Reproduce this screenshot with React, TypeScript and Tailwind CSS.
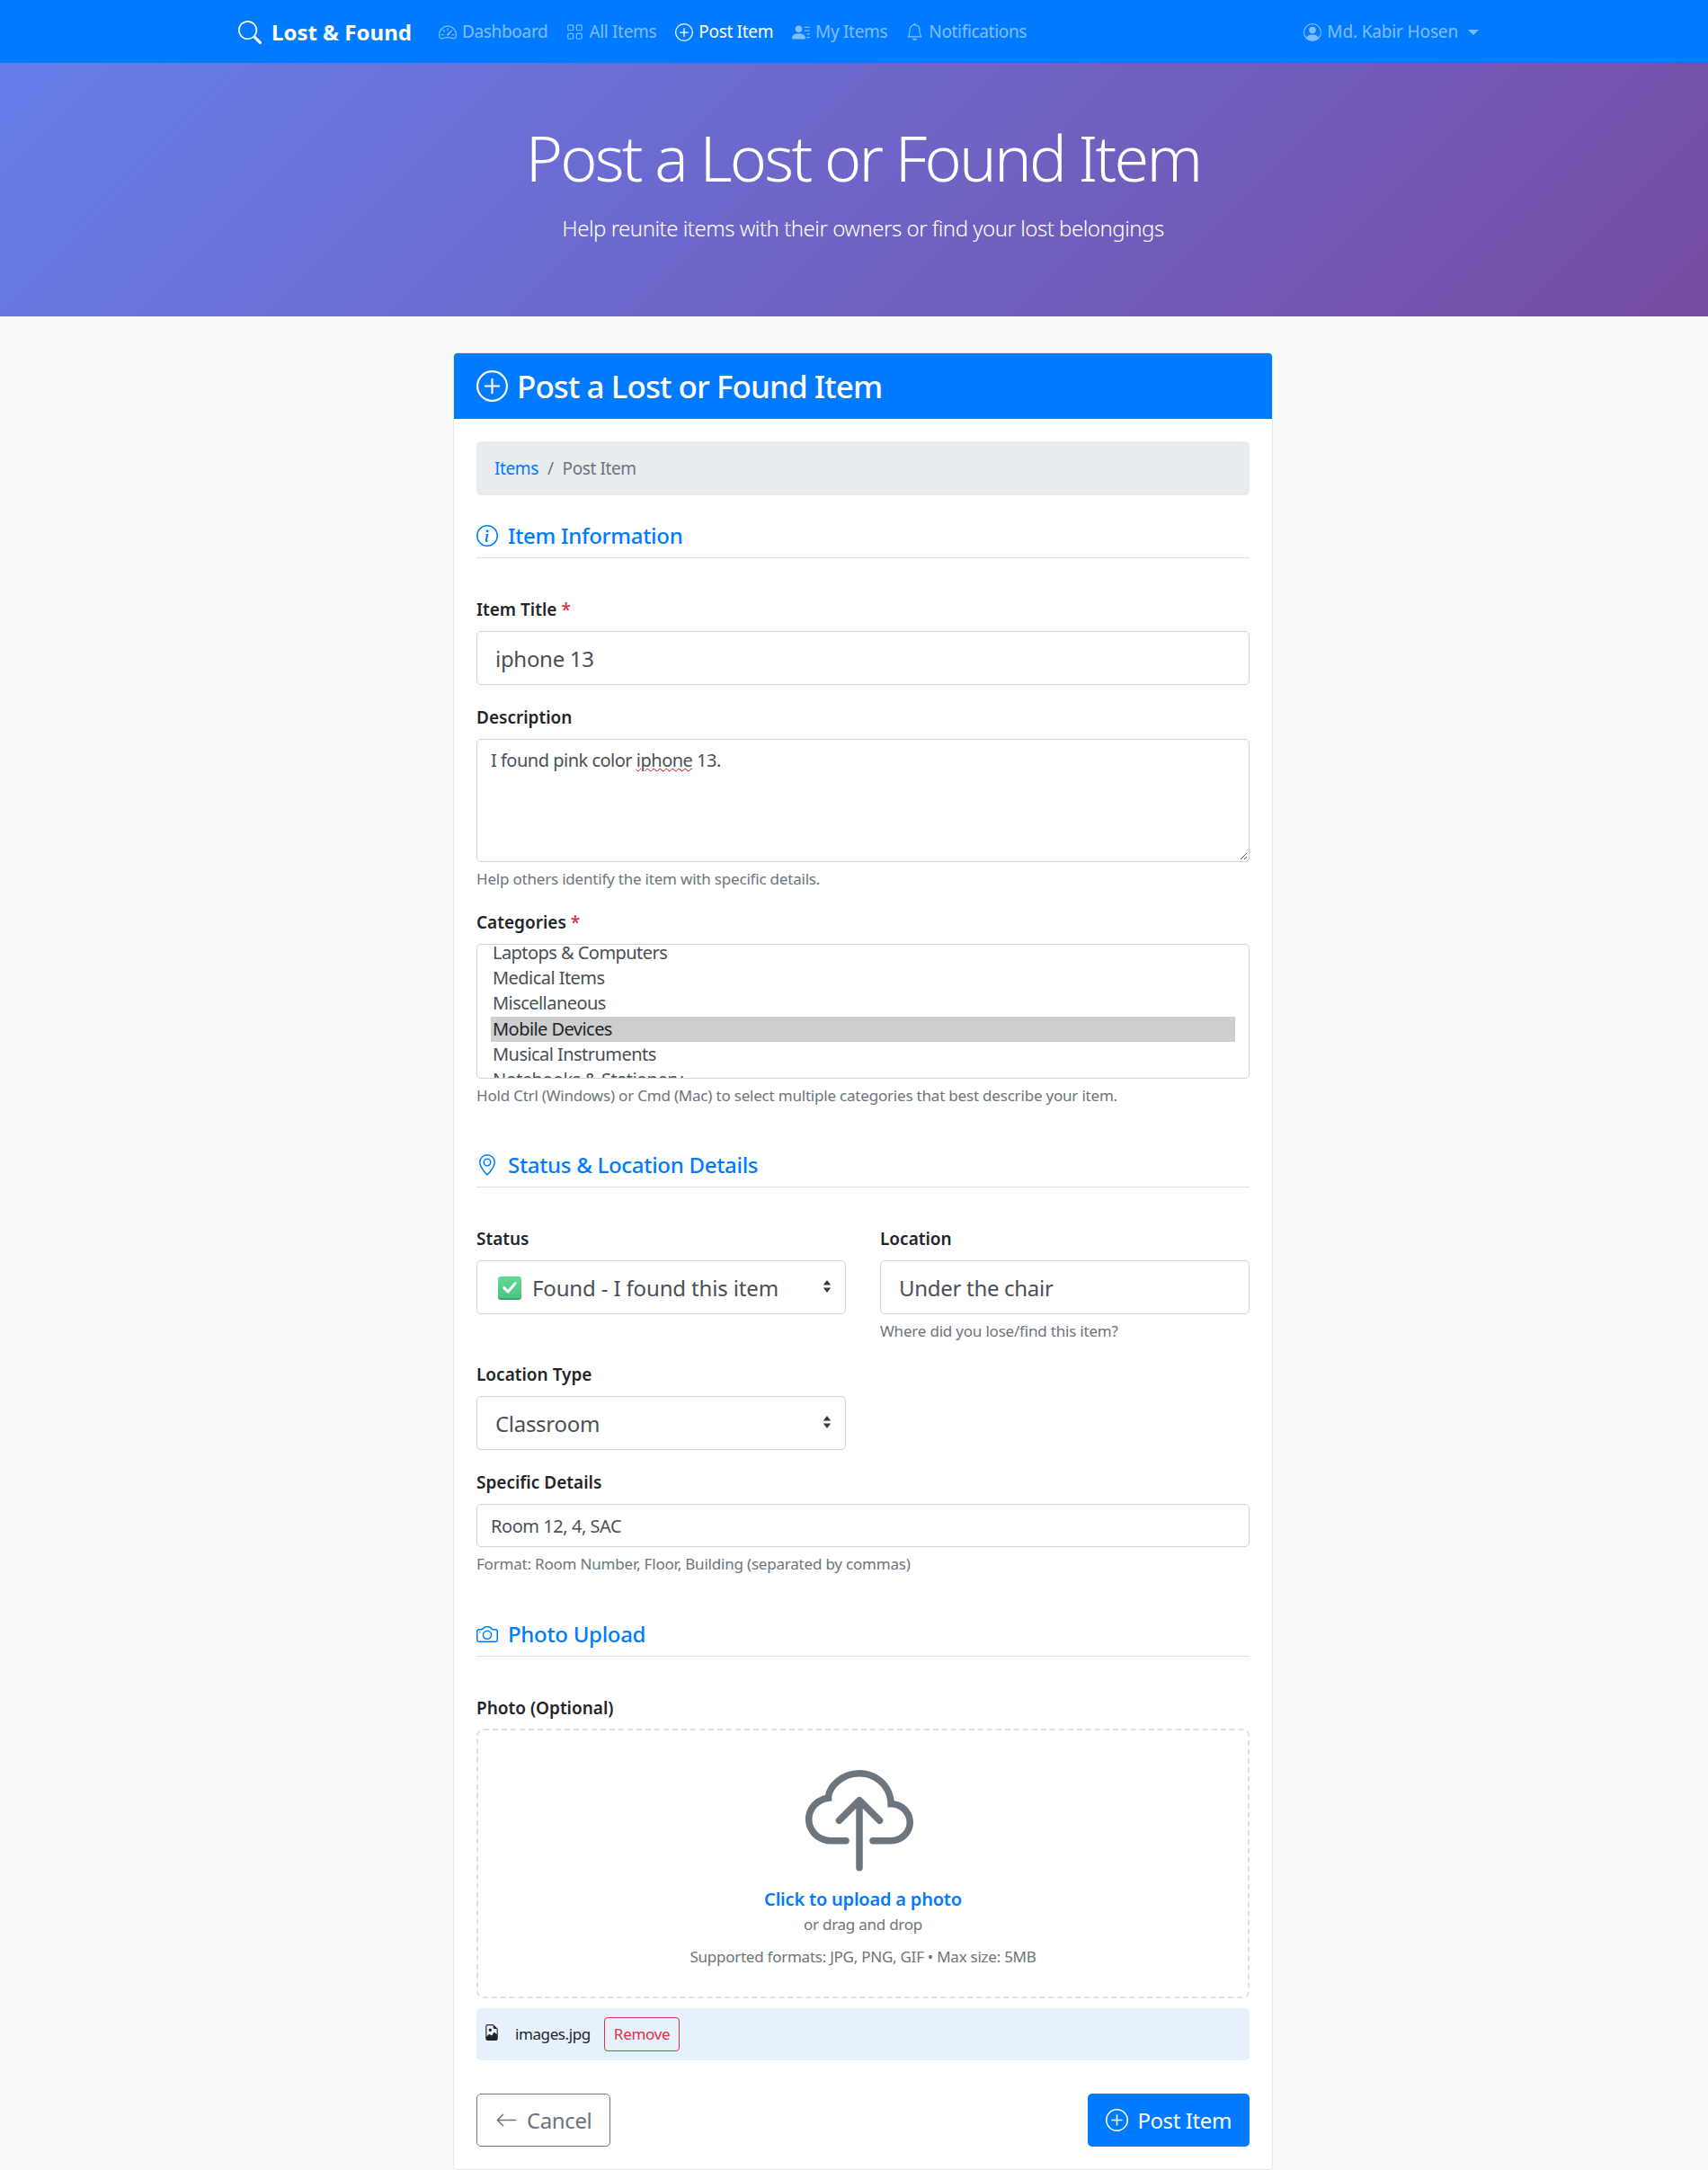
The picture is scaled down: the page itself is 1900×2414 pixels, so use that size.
import {
  BsArrowLeft,
  BsBell,
  BsCamera,
  BsCloudUpload,
  BsFileEarmarkImage,
  BsGeoAlt,
  BsGrid,
  BsInfoCircle,
  BsPersonCircle,
  BsPersonLinesFill,
  BsPlusCircle,
  BsSearch,
  BsSpeedometer2,
} from "react-icons/bs";
import type { ReactNode } from "react";

const navItems = [
  { label: "Dashboard", icon: <BsSpeedometer2 className="w-[20px] h-[20px]" /> },
  { label: "All Items", icon: <BsGrid className="w-[19px] h-[19px]" /> },
  { label: "Post Item", icon: <BsPlusCircle className="w-[20px] h-[20px]" />, active: true },
  { label: "My Items", icon: <BsPersonLinesFill className="w-[20px] h-[20px]" /> },
  { label: "Notifications", icon: <BsBell className="w-[19px] h-[19px]" /> },
];

const categories = ["Laptops & Computers", "Medical Items", "Miscellaneous", "Mobile Devices", "Musical Instruments", "Notebooks & Stationery"];

function SectionTitle({ icon, children, className = "" }: { icon: ReactNode; children: ReactNode; className?: string }) {
  return (
    <div className={`flex items-center h-[44px] border-b border-[#dee2e6] pb-[5px] text-[#007bff] ${className}`}>
      <span className="w-[35px] flex items-center text-[24px]">{icon}</span>
      <h3 className="text-[24px] font-medium tracking-[-0.3px]">{children}</h3>
    </div>
  );
}

function Label({ children, required }: { children: ReactNode; required?: boolean }) {
  return (
    <div className="h-[27px] mb-[11px] pt-[1px] text-[19px] leading-[27px] font-semibold text-[#212529]">
      {children}
      {required && <span className="text-[#dc3545]"> *</span>}
    </div>
  );
}

function Help({ children }: { children: ReactNode }) {
  return <p className="mt-[6px] h-[25px] text-[17px] leading-[25px] text-[#6c757d] tracking-[-0.2px]">{children}</p>;
}

function LargeField({ children }: { children: ReactNode }) {
  return (
    <div className="h-[60px] flex items-center px-[20px] pt-[1px] rounded-[5px] border border-[#ced4da] bg-white text-[24px] text-[#495057] tracking-[-0.3px]">
      {children}
    </div>
  );
}

function SelectArrows() {
  return (
    <svg viewBox="0 0 10 14" className="absolute right-[16px] top-[22px] w-[10px] h-[14px]" fill="#343a40">
      <path d="M5 0 9.2 5.4H.8zM5 14 .8 8.6h8.4z" />
    </svg>
  );
}

export default function App() {
  return (
    <div className="w-[1900px] overflow-hidden bg-[#f8f9fa] font-['Noto_Sans',sans-serif]">
      <div className="w-[1920px]">
        {/* Navbar */}
        <nav className="h-[70px] bg-[#007bff]">
          <div className="mx-auto w-[1400px] h-full flex items-center pl-[5px] pr-[15px] pt-[1px]">
            <div className="flex items-center gap-[11px] text-white mr-[30px]">
              <BsSearch className="w-[26px] h-[26px]" />
              <span className="text-[24px] font-bold">Lost &amp; Found</span>
            </div>
            <div className="flex items-center gap-[21px] text-[19px] tracking-[-0.32px]">
              {navItems.map((item) => (
                <div key={item.label} className={`flex items-center gap-[6px] ${item.active ? "text-white" : "text-white/50"}`}>
                  {item.icon}
                  <span>{item.label}</span>
                </div>
              ))}
            </div>
            <div className="ml-auto flex items-center gap-[6px] text-[19px] tracking-[-0.15px] text-white/50">
              <BsPersonCircle className="w-[20px] h-[20px]" />
              <span>Md. Kabir Hosen</span>
              <span className="ml-[5px] w-0 h-0 border-x-[6px] border-x-transparent border-t-[6px] border-t-white/50" />
            </div>
          </div>
        </nav>

        {/* Hero */}
        <header className="h-[282px] pt-[62px] bg-[linear-gradient(135deg,#667eea_0%,#764ba2_100%)] text-center text-white">
          <h1 className="text-[70px] leading-[86px] font-light tracking-[-2.75px]">Post a Lost or Found Item</h1>
          <p className="mt-[18px] text-[24px] leading-[36px] font-light tracking-[-0.5px]">Help reunite items with their owners or find your lost belongings</p>
        </header>

        {/* Form card */}
        <main className="pt-[40px]">
          <div className="mx-auto w-[912px] rounded-[5px] border border-[#e3e5e8] bg-white overflow-hidden">
            <div className="h-[73px] flex items-center gap-[10px] px-[25px] bg-[#007bff] text-white">
              <BsPlusCircle className="w-[35px] h-[35px]" />
              <h2 className="pt-[1px] text-[35px] font-medium tracking-[-0.95px]">Post a Lost or Found Item</h2>
            </div>

            <div className="px-[25px] pt-[25px] pb-[25px]">
              <div className="h-[60px] flex items-center gap-[10px] px-[20px] pt-[1px] rounded-[5px] bg-[#e9ecef] text-[19px] tracking-[-0.4px]">
                <span className="text-[#007bff]">Items</span>
                <span className="text-[#6c757d]">/</span>
                <span className="text-[#6c757d]">Post Item</span>
              </div>

              <SectionTitle icon={<BsInfoCircle />} className="mt-[26px]">Item Information</SectionTitle>

              <div className="mt-[43px]">
                <Label required>Item Title</Label>
                <LargeField>iphone 13</LargeField>
              </div>

              <div className="mt-[22px]">
                <Label>Description</Label>
                <div className="relative h-[137px] px-[15px] py-[9px] rounded-[5px] border border-[#ced4da] text-[20px] leading-[27px] text-[#495057] tracking-[-0.5px]">
                  I found pink color <span className="underline decoration-wavy decoration-[#e00000] decoration-1">iphone</span> 13.
                  <svg viewBox="0 0 10 10" className="absolute right-[1px] bottom-[1px] w-[10px] h-[10px]" stroke="#555" fill="none">
                    <path d="M9 2 2 9M9 6 6 9" />
                  </svg>
                </div>
                <Help>Help others identify the item with specific details.</Help>
              </div>

              <div className="mt-[22px]">
                <Label required>Categories</Label>
                <div className="h-[150px] overflow-hidden rounded-[5px] border border-[#ced4da] px-[15px] text-[20px] leading-[28.2px] text-[#495057] tracking-[-0.55px]">
                  <div className="-mt-[5px]">
                    {categories.map((c) => (
                      <div key={c} className={`px-[2px] ${c === "Mobile Devices" ? "bg-[#cecece] text-[#212529]" : ""}`}>{c}</div>
                    ))}
                  </div>
                </div>
                <Help>Hold Ctrl (Windows) or Cmd (Mac) to select multiple categories that best describe your item.</Help>
              </div>

              <SectionTitle icon={<BsGeoAlt />} className="mt-[46px]">Status &amp; Location Details</SectionTitle>

              <div className="mt-[43px] grid grid-cols-2 gap-x-[38px]">
                <div>
                  <Label>Status</Label>
                  <div className="relative">
                    <LargeField>
                      <span className="ml-[3px] mr-[12px] flex w-[26px] h-[26px] items-center justify-center rounded-[3px] border-b-2 border-[#3ca86e] bg-gradient-to-b from-[#62d992] to-[#4cc585]">
                        <svg viewBox="0 0 16 16" className="w-[20px] h-[20px]" fill="none" stroke="white" strokeWidth="2.4" strokeLinecap="round" strokeLinejoin="round">
                          <path d="M3 8.5 6.5 12 13 4.5" />
                        </svg>
                      </span>
                      <span className="tracking-[-0.15px]">Found - I found this item</span>
                    </LargeField>
                    <SelectArrows />
                  </div>
                </div>
                <div>
                  <Label>Location</Label>
                  <LargeField>Under the chair</LargeField>
                  <Help>Where did you lose/find this item?</Help>
                </div>
              </div>

              <div className="mt-[22px] w-[411px]">
                <Label>Location Type</Label>
                <div className="relative">
                  <LargeField>Classroom</LargeField>
                  <SelectArrows />
                </div>
              </div>

              <div className="mt-[22px]">
                <Label>Specific Details</Label>
                <div className="h-[48px] flex items-center px-[15px] pt-[1px] rounded-[5px] border border-[#ced4da] text-[20px] text-[#495057] tracking-[-0.45px]">Room 12, 4, SAC</div>
                <Help>Format: Room Number, Floor, Building (separated by commas)</Help>
              </div>

              <SectionTitle icon={<BsCamera />} className="mt-[47px]">Photo Upload</SectionTitle>

              <div className="mt-[43px]">
                <Label>Photo (Optional)</Label>
                <div className="h-[300px] -mt-[1px] flex flex-col items-center rounded-[8px] border-2 border-dashed border-[#dee2e6] text-center pt-[44px]">
                  <BsCloudUpload className="w-[120px] h-[120px] mr-[9px] text-[#6c757d]" />
                  <div className="mt-[9px] text-[20px] leading-[30px] font-semibold text-[#007bff] tracking-[-0.2px]">Click to upload a photo</div>
                  <div className="text-[17px] leading-[26px] text-[#6c757d] tracking-[-0.25px]">or drag and drop</div>
                  <div className="mt-[10px] text-[17px] leading-[26px] text-[#6c757d] tracking-[-0.25px]">Supported formats: JPG, PNG, GIF • Max size: 5MB</div>
                </div>
              </div>

              <div className="mt-[11px] h-[58px] flex items-center rounded-[5px] bg-[#e7f1fb] pl-[10px]">
                <BsFileEarmarkImage className="w-[18px] h-[18px] -ml-[2px] text-[#212529] -mt-[4px]" />
                <span className="ml-[17px] text-[17px] text-[#212529] tracking-[-0.4px]">images.jpg</span>
                <span className="ml-[15px] h-[38px] flex items-center px-[10px] rounded-[4px] border border-[#dc3545] text-[17px] text-[#dc3545] tracking-[-0.3px]">Remove</span>
              </div>

              <div className="mt-[37px] flex justify-between">
                <div className="h-[59px] flex items-center gap-[10px] px-[20px] rounded-[5px] border border-[#6c757d] text-[24px] text-[#6c757d] tracking-[-0.4px]">
                  <BsArrowLeft className="w-[25px] h-[25px]" />
                  Cancel
                </div>
                <div className="h-[59px] flex items-center gap-[10px] px-[20px] rounded-[5px] bg-[#007bff] text-[24px] text-white tracking-[-0.4px]">
                  <BsPlusCircle className="w-[25px] h-[25px]" />
                  Post Item
                </div>
              </div>
            </div>
          </div>
        </main>
      </div>
    </div>
  );
}
